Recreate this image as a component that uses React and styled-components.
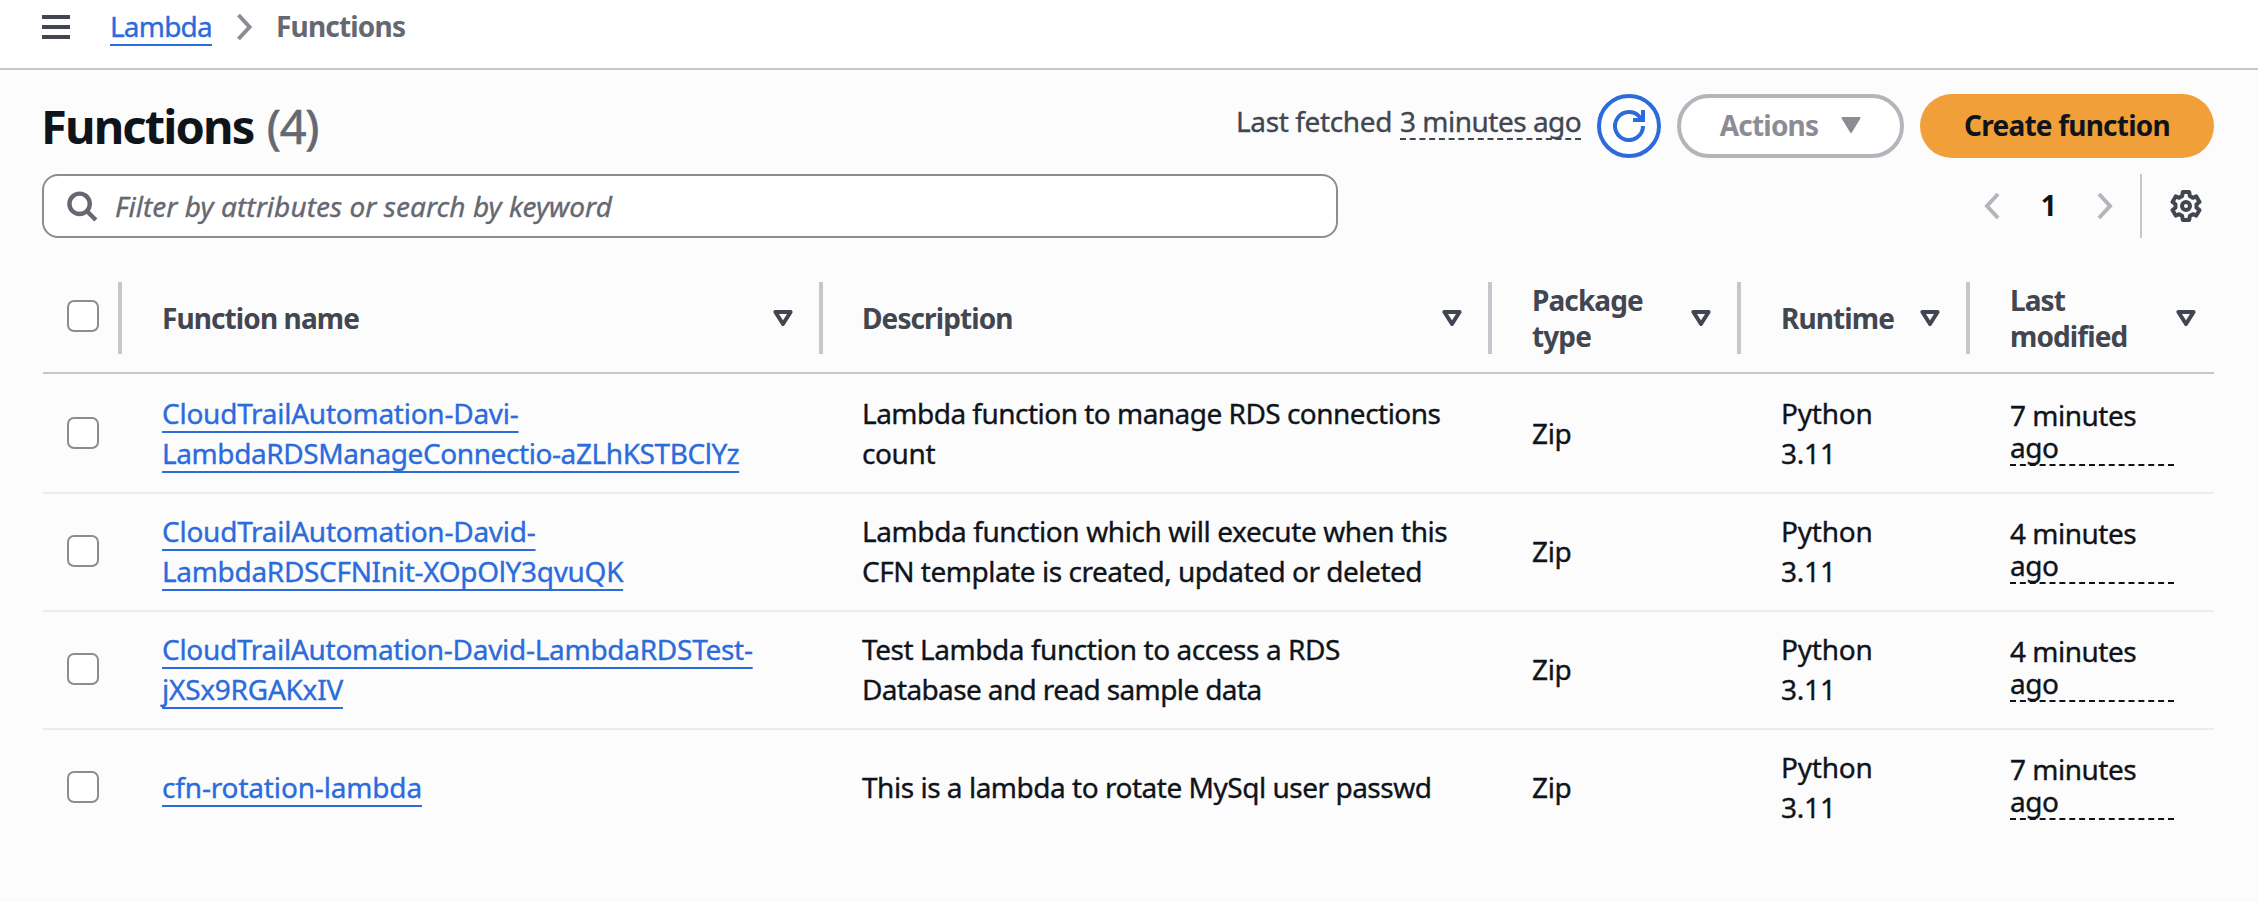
import React from "react";
import styled, { createGlobalStyle } from "styled-components";

const color = {
  text: "#0f141a",
  strong: "#424650",
  muted: "#656871",
  border: "#8c8c94",
  divider: "#c6c6cd",
  disabled: "#b4b4bb",
  rowLine: "#ebebf0",
  link: "#2b6bdb",
  accent: "#f19f38",
};

const GlobalStyle = createGlobalStyle`
  * { box-sizing: border-box; }
  body {
    margin: 0;
    background: #fcfcfd;
    color: ${color.text};
    font-family: "Noto Sans", "Open Sans", sans-serif;
    font-size: 28px;
    line-height: 40px;
    letter-spacing: -0.38px;
    font-variant-ligatures: none;
    -webkit-text-stroke: 0.35px;
  }
`;

const Page = styled.div`
  min-height: 902px;
`;

/* ---- top bar ---- */

const TopBar = styled.header`
  display: flex;
  align-items: flex-start;
  height: 70px;
  padding: 7px 42px 0;
  background: #ffffff;
  border-bottom: 2px solid ${color.divider};
`;

const MenuButton = styled.button`
  display: flex;
  flex-direction: column;
  gap: 6px;
  width: 28px;
  margin: 8px 40px 0 0;
  padding: 0;
  border: 0;
  background: none;
`;

const MenuBar = styled.span`
  height: 4px;
  background: ${color.strong};
`;

const Breadcrumbs = styled.nav`
  display: flex;
  align-items: flex-start;
  line-height: 38px;
`;

const Link = styled.a`
  color: ${color.link};
  letter-spacing: ${(p) => p.$spacing ?? -0.38}px;
  text-decoration: underline;
  text-decoration-thickness: 2px;
  text-decoration-skip-ink: none;
  text-underline-offset: 7px;
  white-space: nowrap;
`;

const CrumbArrow = styled.svg`
  width: 16px;
  height: 28px;
  margin: 6px 24px 0 24px;
`;

const CurrentCrumb = styled.span`
  color: ${color.muted};
  font-weight: 700;
  letter-spacing: -0.8px;
  -webkit-text-stroke: 0;
`;

/* ---- heading and controls ---- */

const Content = styled.main`
  padding: 24px 44px 0 42px;
`;

const HeadingRow = styled.div`
  display: flex;
  align-items: center;
  justify-content: space-between;
  height: 64px;
`;

const Title = styled.h1`
  margin: 0 0 0 -1px;
  font-size: 47px;
  line-height: 64px;
  font-weight: 700;
  letter-spacing: -1.85px;
  word-spacing: 3px;
  -webkit-text-stroke: 0;
`;

const Counter = styled.span`
  color: ${color.muted};
  font-weight: 400;
  letter-spacing: -1.3px;
  -webkit-text-stroke: 0.6px;
`;

const HeadingActions = styled.div`
  display: flex;
  align-items: center;
  gap: 16px;
`;

const FetchedText = styled.div`
  display: flex;
  gap: 8px;
  align-self: flex-start;
  margin-top: 11px;
  color: ${color.strong};
  line-height: 32px;
  white-space: nowrap;
`;

const TimeAgo = styled.div`
  width: ${(p) => p.$width}px;
  padding-bottom: 1px;
  border-bottom: 2px dashed currentColor;
  line-height: 32px;
  letter-spacing: -0.5px;
`;

const ButtonBase = styled.button`
  display: flex;
  align-items: center;
  justify-content: center;
  height: 64px;
  padding: 0 0 2px;
  border-radius: 32px;
  font: inherit;
  font-weight: 700;
  letter-spacing: -0.78px;
  -webkit-text-stroke: 0;
`;

const RefreshButton = styled(ButtonBase)`
  width: 64px;
  padding: 0;
  background: #ffffff;
  border: 4px solid ${color.link};
  color: ${color.link};
`;

const ActionsButton = styled(ButtonBase)`
  gap: 23px;
  width: 227px;
  background: #ffffff;
  border: 4px solid ${color.disabled};
  color: ${color.border};
`;

const CreateButton = styled(ButtonBase)`
  width: 294px;
  background: ${color.accent};
  border: 0;
  color: ${color.text};
`;

const ControlsRow = styled.div`
  display: flex;
  justify-content: space-between;
  margin-top: 16px;
`;

const SearchField = styled.label`
  display: flex;
  align-items: center;
  width: 1296px;
  height: 64px;
  padding-left: 22px;
  background: #ffffff;
  border: 2px solid ${color.border};
  border-radius: 16px;
`;

const SearchInput = styled.input`
  flex: 1;
  height: 40px;
  margin-left: 17px;
  padding: 0;
  border: 0;
  outline: 0;
  background: none;
  font: inherit;
  &::placeholder {
    color: ${color.muted};
    font-style: italic;
    letter-spacing: 0.05px;
    opacity: 1;
  }
`;

const Pagination = styled.div`
  display: flex;
  align-items: center;
  height: 64px;
  padding-right: 12px;
`;

const PageNumber = styled.span`
  width: 97px;
  padding-bottom: 2px;
  text-align: center;
  font-weight: 700;
  -webkit-text-stroke: 0;
`;

const Separator = styled.span`
  width: 2px;
  height: 64px;
  margin: 0 28px 0 27px;
  background: ${color.divider};
`;

/* ---- table ---- */

const columnTracks = "79px 701px 669px 249px 229px 244px";

const Table = styled.div`
  width: 2171px;
  margin-left: 1px;
`;

const HeaderRow = styled.div`
  display: grid;
  grid-template-columns: ${columnTracks};
  align-items: center;
  height: 136px;
  padding: 42px 0 18px;
  border-bottom: 2px solid ${color.divider};
`;

const HeaderCell = styled.div`
  display: flex;
  align-items: center;
  justify-content: space-between;
  height: 72px;
  margin-top: 2px;
  padding-left: ${(p) => p.$pad}px;
  padding-right: ${(p) => (p.$last ? 18 : 26)}px;
  border-right: ${(p) => (p.$last ? 0 : 4)}px solid ${color.divider};
  color: ${color.strong};
  font-weight: 700;
  line-height: 36px;
  letter-spacing: -0.9px;
  -webkit-text-stroke: 0;
`;

const HeaderLabel = styled.span`
  white-space: pre-line;
`;

const Row = styled.div`
  display: grid;
  grid-template-columns: ${columnTracks};
  align-items: center;
  padding: 17px 0 19px;
  border-bottom: 2px solid ${color.rowLine};
  &:nth-child(2) {
    padding-top: 19px;
  }
  &:last-child {
    border-bottom: 0;
  }
`;

const Cell = styled.div`
  padding-left: ${(p) => p.$pad}px;
`;

const TimeCell = styled(Cell)`
  padding-bottom: 2px;
`;

const Line = styled.div`
  white-space: nowrap;
  letter-spacing: ${(p) => p.$spacing ?? -0.38}px;
`;

const CheckCell = styled.div`
  display: flex;
  align-items: center;
  height: 72px;
  padding-left: 24px;
  border-right: ${(p) => (p.$header ? 4 : 0)}px solid ${color.divider};
`;

const Checkbox = styled.input`
  appearance: none;
  width: 32px;
  height: 32px;
  margin: 0;
  background: #ffffff;
  border: 2px solid ${color.border};
  border-radius: 7px;
`;

const HeaderCheck = styled(CheckCell)`
  padding-bottom: 4px;
  margin-top: 2px;
`;

/* ---- icons ---- */

const RefreshIcon = () => (
  <svg width="32" height="32" viewBox="0 0 16 16" fill="none" stroke="currentColor" strokeWidth="2">
    <path d="M15 8a7 7 0 1 1-1.1-3.75" />
    <path d="M10 5h5V0" />
  </svg>
);

const FilledCaret = () => (
  <svg width="20" height="16" viewBox="0 0 20 16" fill="currentColor" stroke="currentColor" strokeWidth="2" strokeLinejoin="round">
    <path d="M1.5 1h17L10 15z" />
  </svg>
);

const SortCaret = () => (
  <svg width="20" height="16" viewBox="0 0 20 16" fill="none" stroke="currentColor" strokeWidth="4" strokeLinejoin="round">
    <path d="M2.4 2h15.2L10 14z" />
  </svg>
);

const SearchIcon = () => (
  <svg width="32" height="32" viewBox="0 0 32 32" fill="none" stroke={color.muted} strokeWidth="4.4">
    <circle cx="13.6" cy="13.8" r="10.2" />
    <path d="M20.8 21l9 9" />
  </svg>
);

const Chevron = ({ left }) => (
  <svg width="16" height="28" viewBox="0 0 16 28" fill="none" stroke={color.disabled} strokeWidth="4">
    <path d={left ? "M14 2L3 14l11 12" : "M2 2l11 12L2 26"} />
  </svg>
);

const GearIcon = () => (
  <svg width="32" height="32" viewBox="0 0 32 32" fill="none" stroke={color.strong} strokeWidth="4" strokeLinejoin="round">
    <path d="M12.8 2.1h6.4L19.8 6l3 1.8 3.5-1.4 3.2 5.5-3 2.4v3.4l3 2.4-3.2 5.5-3.5-1.4-3 1.8-.6 3.9h-6.4l-.6-3.9-3-1.8-3.5 1.4-3.2-5.5 3-2.4v-3.4l-3-2.4 3.2-5.5 3.5 1.4 3-1.8z" />
    <circle cx="16" cy="16" r="4" />
  </svg>
);

/* ---- data ---- */

const columns = [
  { label: "Function name", pad: 40 },
  { label: "Description", pad: 39 },
  { label: "Package\ntype", pad: 40 },
  { label: "Runtime", pad: 40 },
  { label: "Last\nmodified", pad: 40 },
];

const functions = [
  {
    name: [["CloudTrailAutomation-Davi-", -0.25], ["LambdaRDSManageConnectio-aZLhKSTBClYz", -0.41]],
    description: [["Lambda function to manage RDS connections", -0.52], ["count", -0.4]],
    modified: "7 minutes ago",
  },
  {
    name: [["CloudTrailAutomation-David-", -0.25], ["LambdaRDSCFNInit-XOpOlY3qvuQK", -0.32]],
    description: [["Lambda function which will execute when this", -0.4], ["CFN template is created, updated or deleted", -0.48]],
    modified: "4 minutes ago",
  },
  {
    name: [["CloudTrailAutomation-David-LambdaRDSTest-", -0.28], ["jXSx9RGAKxIV", -0.25]],
    description: [["Test Lambda function to access a RDS", -0.44], ["Database and read sample data", -0.62]],
    modified: "4 minutes ago",
  },
  {
    name: [["cfn-rotation-lambda", -0.16]],
    description: [["This is a lambda to rotate MySql user passwd", -0.48]],
    modified: "7 minutes ago",
  },
];

export default function App() {
  return (
    <Page>
      <GlobalStyle />
      <TopBar>
        <MenuButton aria-label="Open navigation">
          <MenuBar />
          <MenuBar />
          <MenuBar />
        </MenuButton>
        <Breadcrumbs>
          <Link $spacing={-0.8}>Lambda</Link>
          <CrumbArrow viewBox="0 0 16 28" fill="none" stroke={color.border} strokeWidth="4">
            <path d="M2.5 2l11 12-11 12" />
          </CrumbArrow>
          <CurrentCrumb>Functions</CurrentCrumb>
        </Breadcrumbs>
      </TopBar>
      <Content>
        <HeadingRow>
          <Title>
            Functions <Counter>(4)</Counter>
          </Title>
          <HeadingActions>
            <FetchedText>
              Last fetched <TimeAgo $width={181}>3 minutes ago</TimeAgo>
            </FetchedText>
            <RefreshButton aria-label="Refresh">
              <RefreshIcon />
            </RefreshButton>
            <ActionsButton>
              Actions <FilledCaret />
            </ActionsButton>
            <CreateButton>Create function</CreateButton>
          </HeadingActions>
        </HeadingRow>
        <ControlsRow>
          <SearchField>
            <SearchIcon />
            <SearchInput placeholder="Filter by attributes or search by keyword" />
          </SearchField>
          <Pagination>
            <Chevron left />
            <PageNumber>1</PageNumber>
            <Chevron />
            <Separator />
            <GearIcon />
          </Pagination>
        </ControlsRow>
        <Table>
          <HeaderRow>
            <HeaderCheck $header>
              <Checkbox type="checkbox" />
            </HeaderCheck>
            {columns.map((c, i) => (
              <HeaderCell key={c.label} $pad={c.pad} $last={i === columns.length - 1}>
                <HeaderLabel>{c.label}</HeaderLabel>
                <SortCaret />
              </HeaderCell>
            ))}
          </HeaderRow>
          {functions.map((f) => (
            <Row key={f.name[0][0]}>
              <CheckCell>
                <Checkbox type="checkbox" />
              </CheckCell>
              <Cell $pad={40}>
                {f.name.map(([text, spacing]) => (
                  <Line key={text}>
                    <Link $spacing={spacing}>{text}</Link>
                  </Line>
                ))}
              </Cell>
              <Cell $pad={39}>
                {f.description.map(([text, spacing]) => (
                  <Line key={text} $spacing={spacing}>{text}</Line>
                ))}
              </Cell>
              <Cell $pad={40}>Zip</Cell>
              <Cell $pad={40}>
                <Line $spacing={-0.2}>Python</Line>
                <Line $spacing={-0.2}>3.11</Line>
              </Cell>
              <TimeCell $pad={40}>
                <TimeAgo $width={164}>{f.modified}</TimeAgo>
              </TimeCell>
            </Row>
          ))}
        </Table>
      </Content>
    </Page>
  );
}
